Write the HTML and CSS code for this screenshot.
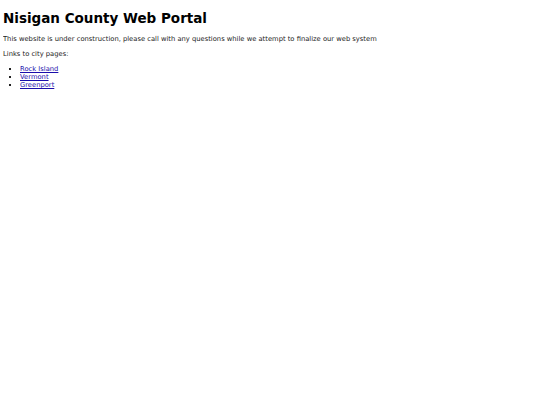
FILE: index.html
```html
<!DOCTYPE html>
<html>
<head>
<meta charset="utf-8">
<link rel="stylesheet" href="styles.css">
</head>
<body>
<h1 class="title">Nisigan County Web Portal</h1>
<p class="text">This website is under construction, please call with any questions while we attempt to finalize our web system</p>
<p class="text">Links to city pages:</p>
<ul class="links">
<li><a href="#">Rock Island</a></li>
<li><a href="#">Vermont</a></li>
<li><a href="#">Greenport</a></li>
</ul>
</body>
</html>
```
FILE: styles.css
```css
body {
  margin: 2px 3px;
  font-family: "DejaVu Sans", Verdana, sans-serif;
  font-size: 6.75px;
  color: #222;
  background: #fff;
}
.title {
  font-size: 13.5px;
  font-weight: bold;
  color: #000;
  margin: 8px 0 9px;
}
.text {
  margin: 7px 0;
}
.links {
  margin: 7px 0;
  padding-left: 17px;
  list-style-type: square;
}
.links a {
  color: #1a0dab;
}
```
